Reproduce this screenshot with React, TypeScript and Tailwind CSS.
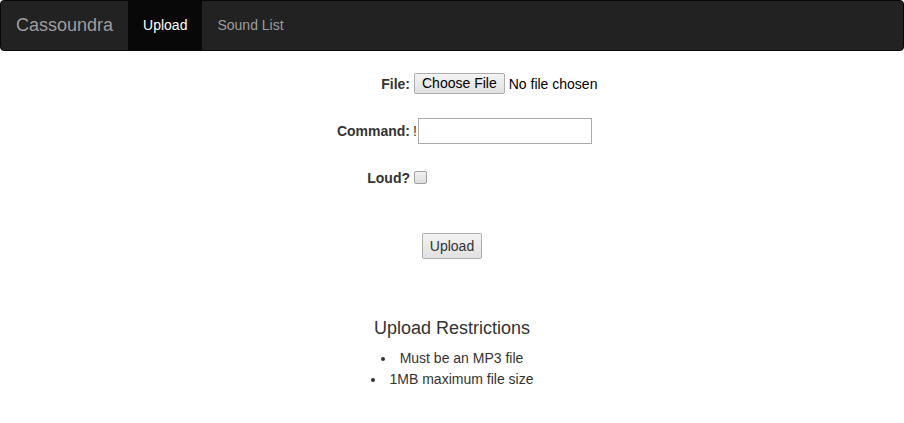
export default function App() {
  return (
    <div className="min-h-[423px] bg-white text-[14px] leading-[20px] text-[#333] font-['Liberation_Sans',Arial,sans-serif]">
      <nav className="flex h-[51px] rounded-[4px] border border-[#080808] bg-[#222]">
        <a className="px-[15px] text-[18px] leading-[49px] text-[#9d9d9d]">Cassoundra</a>
        <ul className="flex">
          <li className="bg-[#080808] px-[15px] leading-[49px] text-white">Upload</li>
          <li className="px-[15px] leading-[49px] text-[#9d9d9d]">Sound List</li>
        </ul>
      </nav>

      <form className="flex flex-col">
        <div className="mt-[22px] flex h-[21px] items-center">
          <label className="w-[410px] text-right font-bold">File:</label>
          <div className="flex items-center pl-[4px]">
            <button
              type="button"
              className="h-[21px] rounded-[2px] border border-[#adadad] bg-gradient-to-b from-[#f3f3f3] to-[#e1e1e1] px-[7px] text-[14px] leading-[19px] text-black"
            >
              Choose File
            </button>
            <span className="ml-[4px] text-black">No file chosen</span>
          </div>
        </div>

        <div className="mt-[24px] flex h-[26px] items-center">
          <label className="w-[410px] text-right font-bold">Command:</label>
          <div className="flex items-center pl-[3px]">
            <span>!</span>
            <input className="ml-[1px] h-[26px] w-[174px] border border-[#a9a9a9] bg-white px-[2px] outline-none" />
          </div>
        </div>

        <div className="mt-[27px] flex h-[13px] items-center">
          <label className="w-[410px] text-right font-bold">Loud?</label>
          <div className="flex items-center pl-[4px]">
            <span className="block h-[13px] w-[13px] rounded-[2px] border border-[#a0a0a0] bg-gradient-to-b from-[#f2f2f2] to-[#dcdcdc]" />
          </div>
        </div>

        <div className="mt-[49px] flex justify-center">
          <button
            type="button"
            className="h-[26px] rounded-[2px] border border-[#adadad] bg-gradient-to-b from-[#f3f3f3] to-[#e1e1e1] px-[7px] text-[14px] leading-[24px] text-[#333]"
          >
            Upload
          </button>
        </div>
      </form>

      <div className="mt-[59px] flex flex-col items-center">
        <h4 className="text-[18px] leading-[20px] font-normal">Upload Restrictions</h4>
        <ul className="mt-[10px] list-inside list-disc text-center leading-[20.5px]">
          <li>Must be an MP3 file</li>
          <li>1MB maximum file size</li>
        </ul>
      </div>
    </div>
  );
}
